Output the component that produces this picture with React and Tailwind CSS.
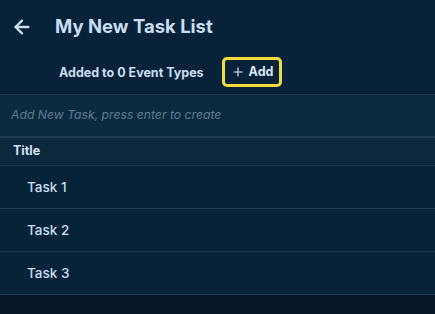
import React from 'react';
import { ArrowLeft, Plus } from 'lucide-react';

const tasks = ['Task 1', 'Task 2', 'Task 3'];

const App = () => {
  return (
    <div className="w-[435px] h-[314px] bg-[#051729] text-[#c9dff0] overflow-hidden" style={{ fontFamily: 'Inter, "Noto Sans", sans-serif' }}>
      {/* Header */}
      <div className="bg-[#08223a]">
        <div className="flex items-center h-[54px] pl-[11px]">
          <ArrowLeft size={22} strokeWidth={2.5} className="text-[#c9dff0]" />
          <h1 className="ml-[22px] text-[18.5px] font-bold text-[#c9dff0] whitespace-nowrap">My New Task List</h1>
        </div>
        <div className="flex items-center h-[39px] pl-[59px]">
          <span className="text-[12.5px] font-bold whitespace-nowrap">Added to 0 Event Types</span>
          <button className="ml-[18px] -mt-[3px] flex items-center gap-[4px] h-[30px] pl-[6px] pr-[6px] border-[3px] border-[#f2dc3a] rounded-[5px] text-[12.5px] font-bold text-[#dbeaf6]">
            <Plus size={14} strokeWidth={2} />
            Add
          </button>
        </div>
        <div className="h-px bg-[#04182a]" />
        <div className="h-px bg-[#1c3a4e]" />
      </div>

      {/* New task input */}
      <div className="bg-[#0c2a3f] h-[41px] flex items-center px-[11px]">
        <input
          placeholder="Add New Task, press enter to create"
          className="w-full bg-transparent outline-none italic text-[12.2px] placeholder:text-[#5f7b90]"
        />
      </div>
      <div className="h-[2px] bg-[#1c3b4f]" />

      {/* Table header */}
      <div className="bg-[#0b283d] h-[27px] flex items-center px-[13px]">
        <span className="text-[12.5px] font-bold text-[#d0e3f2]">Title</span>
      </div>
      <div className="h-px bg-[#1c3b4f]" />

      {/* Rows */}
      {tasks.map((t) => (
        <div key={t}>
          <div className="bg-[#072338] h-[42px] flex items-center pl-[27px]">
            <span className="text-[13.5px] font-medium">{t}</span>
          </div>
          <div className="h-px bg-[#1f3c50]" />
        </div>
      ))}
    </div>
  );
};

export default App;
